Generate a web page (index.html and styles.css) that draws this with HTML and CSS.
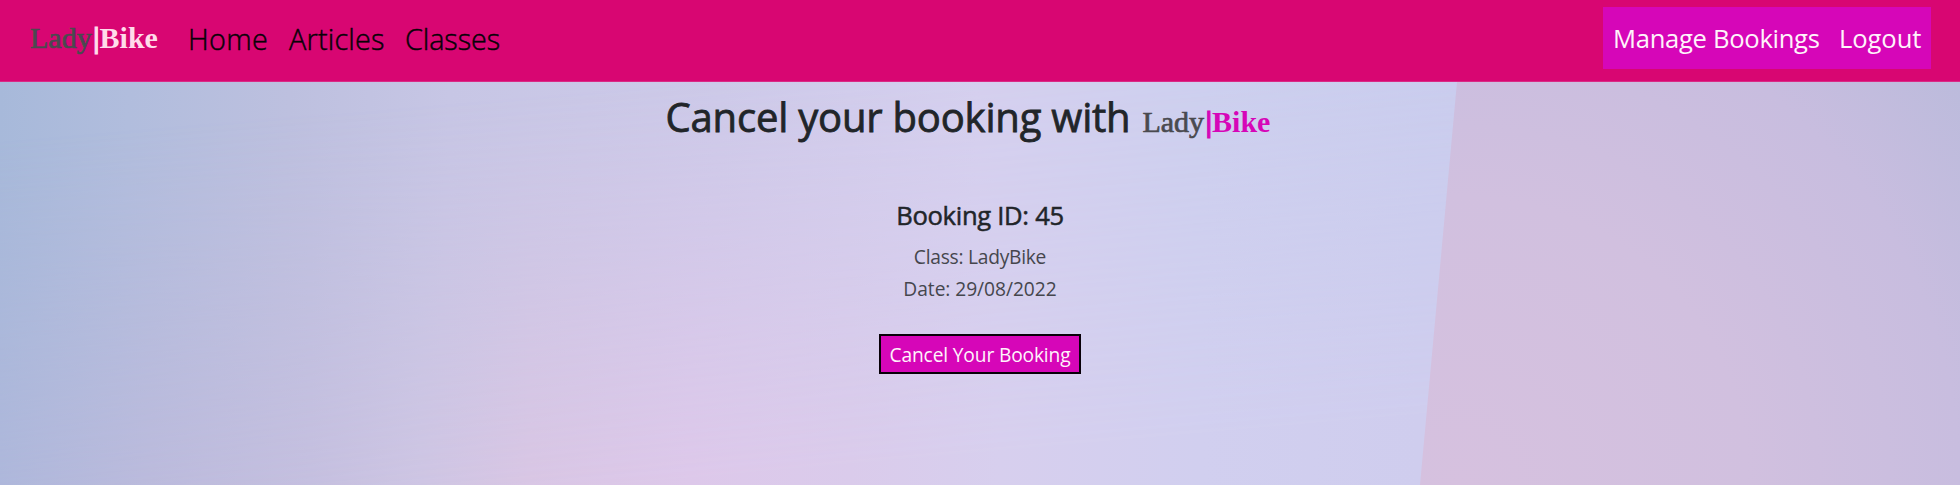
FILE: index.html
```
<!DOCTYPE html>
<html lang="en">
<head>
<meta charset="utf-8">
<title>LadyBike - Cancel booking</title>
<link rel="stylesheet" href="styles.css">
</head>
<body>
<header class="navbar">
  <a class="logo logo-light"><span class="lady">Lady</span><span class="bar">|</span><span class="bike">Bike</span></a>
  <nav class="links">
    <a class="home">Home</a>
    <a class="articles">Articles</a>
    <a class="classes">Classes</a>
  </nav>
  <nav class="account">
    <a class="manage">Manage Bookings</a>
    <a class="logout">Logout</a>
  </nav>
</header>
<main class="page">
  <h1 class="title"><span>Cancel your booking with</span><span class="logo"><span class="lady">Lady</span><span class="bar">|</span><span class="bike">Bike</span></span></h1>
  <h2 class="booking">Booking ID: 45</h2>
  <p class="detail">Class: LadyBike</p>
  <p class="detail date">Date: 29/08/2022</p>
  <button class="cancel">Cancel Your Booking</button>
</main>
</body>
</html>
```
FILE: styles.css
```
* { box-sizing: border-box; }
body {
  margin: 0;
  height: 485px;
  overflow: hidden;
  display: flex;
  flex-direction: column;
  font-family: "Open Sans", "Noto Sans", sans-serif;
  color: #212529;
}
.navbar {
  height: 82px;
  flex: none;
  display: flex;
  align-items: flex-start;
  padding: 0 29px 0 30px;
  background: #d80672;
  border-bottom: 1px solid #d92a86;
}
.logo {
  display: flex;
  align-items: baseline;
  font-family: "Liberation Serif", serif;
  font-size: 30px;
  line-height: 40px;
  color: #4a4a4f;
}
.lady { width: 63px; -webkit-text-stroke: 0.7px currentColor; }
.bar { width: 6.6px; font-weight: 700; -webkit-text-stroke: 1.2px currentColor; color: #d606b8; }
.bike { font-weight: 700; color: #d606b8; }
.logo-light { margin-top: 18px; width: 158px; }
.logo-light .bar, .logo-light .bike { color: #ffdcea; }
.links {
  display: flex;
  padding-top: 19px;
  font-size: 28.8px;
  line-height: 40px;
  font-weight: 300;
  color: #080207;
  -webkit-text-stroke: 0.45px currentColor;
}
.home { width: 101px; letter-spacing: 0.3px; }
.articles { width: 116px; letter-spacing: 0.2px; }
.classes { letter-spacing: -0.1px; }
.account {
  display: flex;
  width: 328px;
  height: 62px;
  margin: 7px 0 0 auto;
  padding-left: 10px;
  font-size: 25.6px;
  line-height: 64px;
  background: #d606b8;
  color: #fff3fb;
  white-space: nowrap;
}
.manage { width: 226px; letter-spacing: -0.3px; }
.logout { letter-spacing: -0.1px; }
.page {
  flex: 1;
  display: flex;
  flex-direction: column;
  align-items: center;
  position: relative;
  isolation: isolate;
  background: linear-gradient(92deg, #a7b9da 0, #b1bddd 130px, #bdc0df 290px, #c7c6e5 450px, #cdcae9 720px, #d5d0ef 980px, #cdd0ef 1200px, #c9cdee 1457px);
}
.page::before {
  content: "";
  position: absolute;
  inset: 0;
  z-index: -2;
  background: linear-gradient(90deg, #afb7db 0, #bcbadc 150px, #c5bfdf 310px, #cec5e3 420px, #d9c6e4 530px, #ddc8ea 690px, #dacbeb 850px, #d7cfee 1000px, #d1cfef 1200px, #cfcdee 1420px);
  -webkit-mask-image: linear-gradient(175deg, transparent 10%, #000 80%);
  mask-image: linear-gradient(175deg, transparent 10%, #000 80%);
}
.page::after {
  content: "";
  position: absolute;
  inset: 0;
  z-index: -1;
  clip-path: polygon(1457px 0, 1960px 0, 1960px 403px, 1420px 403px);
  background: radial-gradient(ellipse 640px 640px at 1460px 403px, #d6c1df 0, #d1c0df 45%, #c8bddf 78%, #bcbbdc 100%);
}
.title {
  display: flex;
  align-items: baseline;
  gap: 12px;
  margin: 10px 0 0;
  padding-right: 24px;
  font-size: 40px;
  line-height: 50px;
  font-weight: 500;
  letter-spacing: -0.2px;
  white-space: nowrap;
  -webkit-text-stroke: 0.8px currentColor;
}
.title .logo { width: 128px; font-weight: 400; letter-spacing: 0; }
.title .bike { -webkit-text-stroke: 0; }
.booking {
  margin: 59px 0 0;
  font-size: 25.6px;
  line-height: 30px;
  font-weight: 500;
  letter-spacing: -0.3px;
  -webkit-text-stroke: 0.5px currentColor;
}
.detail {
  margin: 10px 0 0;
  font-size: 19.2px;
  line-height: 32px;
  letter-spacing: -0.25px;
  color: #45464d;
}
.date { margin-top: 0; letter-spacing: -0.05px; }
.cancel {
  width: 202px;
  height: 40px;
  margin-top: 29px;
  padding: 1px 0 0;
  border: 2px solid #080008;
  background: #d606b8;
  color: #fff3fb;
  font-family: inherit;
  font-size: 19.2px;
  line-height: 35px;
  letter-spacing: -0.15px;
  white-space: nowrap;
}
```
